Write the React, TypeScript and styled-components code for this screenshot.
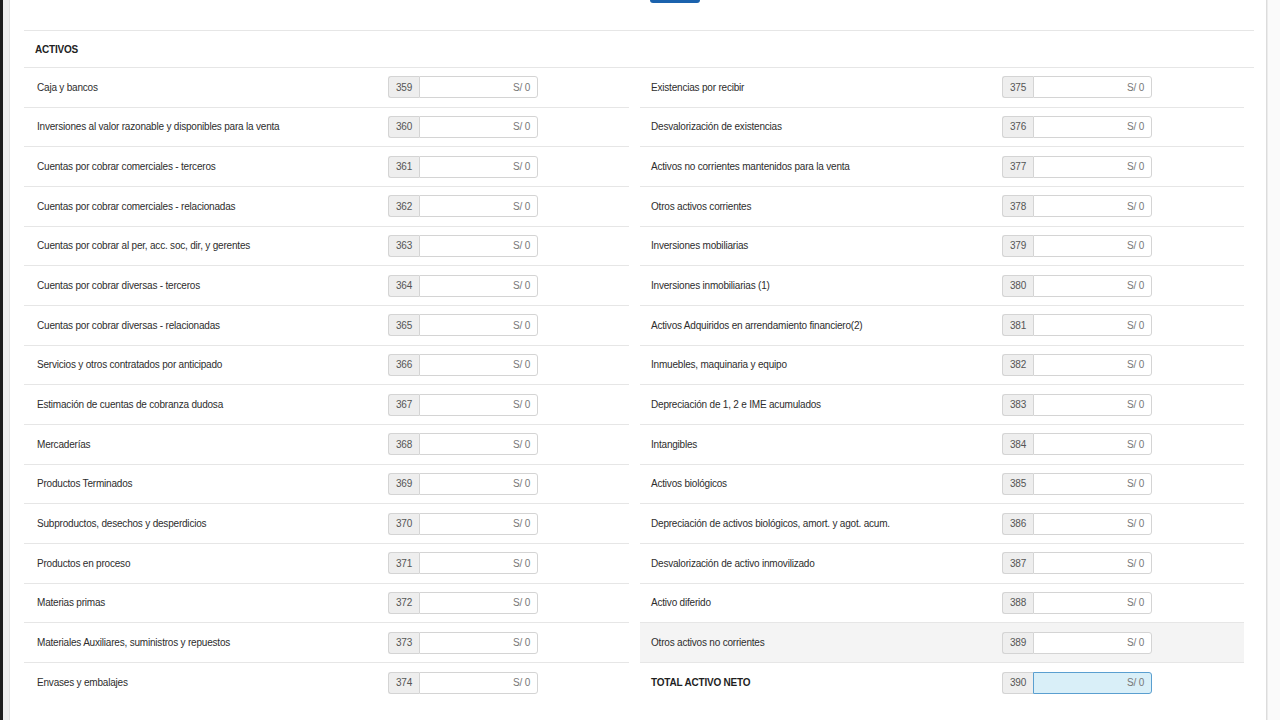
import React from "react";
import styled, { createGlobalStyle } from "styled-components";

const GlobalStyle = createGlobalStyle`
  html, body {
    margin: 0;
    padding: 0;
    background: #fff;
    font-family: "Liberation Sans", Arial, sans-serif;
    color: #333;
    overflow: hidden;
  }
`;

const Page = styled.div`
  display: flex;
  width: 1280px;
  height: 720px;
`;

const DarkEdge = styled.div`
  width: 3px;
  background: #1e1e1e;
`;

const Gutter = styled.div`
  width: 6px;
  background: #efefef;
  border-right: 1px solid #e2e2e2;
`;

const Main = styled.div`
  flex: 1;
  display: flex;
  flex-direction: column;
  background: #fff;
  border-right: 1px solid #dcdcdc;
`;

const Scrollbar = styled.div`
  width: 12px;
  background: #fafafa;
  border-left: 1px solid #ececec;
`;

const TopBar = styled.div`
  box-sizing: border-box;
  height: 30px;
  display: flex;
  justify-content: center;
  padding-left: 73px;
`;

const SaveButton = styled.div`
  width: 50px;
  height: 3px;
  background: #1b62ad;
  border-radius: 0 0 3px 3px;
`;

const Section = styled.div`
  margin: 0 12px 0 14px;
  border-top: 1px solid #e6e6e6;
`;

const SectionTitle = styled.div`
  height: 36px;
  display: flex;
  align-items: center;
  padding-left: 11px;
  font-size: 10px;
  letter-spacing: -0.2px;
  font-weight: bold;
  color: #222;
  border-bottom: 1px solid #e6e6e6;
`;

const Columns = styled.div`
  display: grid;
  grid-template-columns: 605px 604px;
  column-gap: 11px;
`;

const Column = styled.div<{ $right?: boolean }>`
  display: flex;
  flex-direction: column;
  --row-pad: ${(p) => (p.$right ? "11px" : "13px")};
  --input-x: ${(p) => (p.$right ? "362px" : "364px")};
`;

const Row = styled.div<{ $last?: boolean; $shaded?: boolean }>`
  box-sizing: border-box;
  height: 39.67px;
  display: flex;
  align-items: center;
  padding-left: var(--row-pad);
  border-bottom: ${(p) => (p.$last ? "none" : "1px solid #e6e6e6")};
  background: ${(p) => (p.$shaded ? "#f4f4f4" : "transparent")};
`;

const Label = styled.div<{ $bold?: boolean }>`
  width: calc(var(--input-x) - var(--row-pad));
  flex-shrink: 0;
  font-size: 10px;
  letter-spacing: -0.2px;
  font-weight: ${(p) => (p.$bold ? "bold" : "normal")};
  color: ${(p) => (p.$bold ? "#1f1f1f" : "#2d2d2d")};
  white-space: nowrap;
`;

const InputGroup = styled.div`
  display: flex;
  height: 22px;
  width: 150px;
  font-size: 10px;
  letter-spacing: -0.2px;
`;

const Addon = styled.div`
  width: 30px;
  display: flex;
  align-items: center;
  justify-content: center;
  background: #eee;
  border: 1px solid #d4d4d4;
  border-right: none;
  border-radius: 3px 0 0 3px;
  color: #555;
`;

const Amount = styled.div<{ $total?: boolean }>`
  flex: 1;
  display: flex;
  align-items: center;
  justify-content: flex-end;
  padding-right: 7px;
  background: ${(p) => (p.$total ? "#d9eff8" : "#fff")};
  border: 1px solid ${(p) => (p.$total ? "#5a9fd0" : "#d4d4d4")};
  border-radius: 0 3px 3px 0;
  color: #777;
`;

interface Item {
  label: string;
  code: number;
  bold?: boolean;
  shaded?: boolean;
  total?: boolean;
}

const left: Item[] = [
  { label: "Caja y bancos", code: 359 },
  { label: "Inversiones al valor razonable y disponibles para la venta", code: 360 },
  { label: "Cuentas por cobrar comerciales - terceros", code: 361 },
  { label: "Cuentas por cobrar comerciales - relacionadas", code: 362 },
  { label: "Cuentas por cobrar al per, acc. soc, dir, y gerentes", code: 363 },
  { label: "Cuentas por cobrar diversas - terceros", code: 364 },
  { label: "Cuentas por cobrar diversas - relacionadas", code: 365 },
  { label: "Servicios y otros contratados por anticipado", code: 366 },
  { label: "Estimación de cuentas de cobranza dudosa", code: 367 },
  { label: "Mercaderías", code: 368 },
  { label: "Productos Terminados", code: 369 },
  { label: "Subproductos, desechos y desperdicios", code: 370 },
  { label: "Productos en proceso", code: 371 },
  { label: "Materias primas", code: 372 },
  { label: "Materiales Auxiliares, suministros y repuestos", code: 373 },
  { label: "Envases y embalajes", code: 374 },
];

const right: Item[] = [
  { label: "Existencias por recibir", code: 375 },
  { label: "Desvalorización de existencias", code: 376 },
  { label: "Activos no corrientes mantenidos para la venta", code: 377 },
  { label: "Otros activos corrientes", code: 378 },
  { label: "Inversiones mobiliarias", code: 379 },
  { label: "Inversiones inmobiliarias (1)", code: 380 },
  { label: "Activos Adquiridos en arrendamiento financiero(2)", code: 381 },
  { label: "Inmuebles, maquinaria y equipo", code: 382 },
  { label: "Depreciación de 1, 2 e IME acumulados", code: 383 },
  { label: "Intangibles", code: 384 },
  { label: "Activos biológicos", code: 385 },
  { label: "Depreciación de activos biológicos, amort. y agot. acum.", code: 386 },
  { label: "Desvalorización de activo inmovilizado", code: 387 },
  { label: "Activo diferido", code: 388 },
  { label: "Otros activos no corrientes", code: 389, shaded: true },
  { label: "TOTAL ACTIVO NETO", code: 390, bold: true, total: true },
];

function FieldRow({ item, last }: { item: Item; last: boolean }) {
  return (
    <Row $last={last} $shaded={item.shaded}>
      <Label $bold={item.bold}>{item.label}</Label>
      <InputGroup>
        <Addon>{item.code}</Addon>
        <Amount $total={item.total}>S/ 0</Amount>
      </InputGroup>
    </Row>
  );
}

export default function App() {
  return (
    <Page>
      <GlobalStyle />
      <DarkEdge />
      <Gutter />
      <Main>
        <TopBar>
          <SaveButton />
        </TopBar>
        <Section>
          <SectionTitle>ACTIVOS</SectionTitle>
          <Columns>
            <Column>
              {left.map((it, i) => (
                <FieldRow key={it.code} item={it} last={i === left.length - 1} />
              ))}
            </Column>
            <Column $right>
              {right.map((it, i) => (
                <FieldRow key={it.code} item={it} last={i === right.length - 1} />
              ))}
            </Column>
          </Columns>
        </Section>
      </Main>
      <Scrollbar />
    </Page>
  );
}
